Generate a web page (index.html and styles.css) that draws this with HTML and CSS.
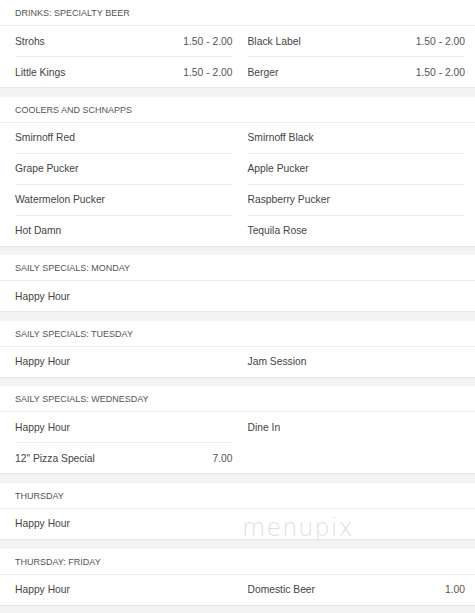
FILE: index.html
```html
<!DOCTYPE html>
<html lang="en">
<head>
    <meta charset="UTF-8">
    <title>Menu</title>
    <link rel="stylesheet" href="styles.css">
</head>
<body>

<div class="menu">
    <div class="section">
        <div class="section-title">DRINKS: SPECIALTY BEER</div>
        <div class="items">
            <div class="item"><span>Strohs</span><span class="price">1.50 - 2.00</span></div>
            <div class="item"><span>Black Label</span><span class="price">1.50 - 2.00</span></div>
            <div class="item"><span>Little Kings</span><span class="price">1.50 - 2.00</span></div>
            <div class="item"><span>Berger</span><span class="price">1.50 - 2.00</span></div>
        </div>
    </div>

    <div class="section">
        <div class="section-title">COOLERS AND SCHNAPPS</div>
        <div class="items">
            <div class="item"><span>Smirnoff Red</span></div>
            <div class="item"><span>Smirnoff Black</span></div>
            <div class="item"><span>Grape Pucker</span></div>
            <div class="item"><span>Apple Pucker</span></div>
            <div class="item"><span>Watermelon Pucker</span></div>
            <div class="item"><span>Raspberry Pucker</span></div>
            <div class="item"><span>Hot Damn</span></div>
            <div class="item"><span>Tequila Rose</span></div>
        </div>
    </div>

    <div class="section">
        <div class="section-title">SAILY SPECIALS: MONDAY</div>
        <div class="items">
            <div class="item"><span>Happy Hour</span></div>
        </div>
    </div>

    <div class="section">
        <div class="section-title">SAILY SPECIALS: TUESDAY</div>
        <div class="items">
            <div class="item"><span>Happy Hour</span></div>
            <div class="item"><span>Jam Session</span></div>
        </div>
    </div>

    <div class="section">
        <div class="section-title">SAILY SPECIALS: WEDNESDAY</div>
        <div class="items">
            <div class="item"><span>Happy Hour</span></div>
            <div class="item"><span>Dine In</span></div>
            <div class="item"><span>12" Pizza Special</span><span class="price">7.00</span></div>
        </div>
    </div>

    <div class="section watermarked">
        <div class="section-title">THURSDAY</div>
        <div class="items">
            <div class="item"><span>Happy Hour</span></div>
        </div>
        <div class="watermark">menupix</div>
    </div>

    <div class="section">
        <div class="section-title">THURSDAY: FRIDAY</div>
        <div class="items">
            <div class="item"><span>Happy Hour</span></div>
            <div class="item"><span>Domestic Beer</span><span class="price">1.00</span></div>
        </div>
    </div>
</div>

</body>
</html>
```

FILE: styles.css
```css
body {
    margin: 0;
    padding: 0;
    background-color: #f3f3f3;
    font-family: "Liberation Sans", Arial, sans-serif;
    color: #444;
}

.menu {
    display: flex;
    flex-direction: column;
    gap: 8.6px;
}

.section {
    background-color: #ffffff;
    border-bottom: 1px solid #e6e6e6;
}

.section-title {
    height: 24px;
    line-height: 24px;
    padding: 1px 0 0 15px;
    font-size: 9px;
    color: #555;
    border-bottom: 1px solid #ececec;
}

.items {
    display: grid;
    grid-template-columns: 1fr 1fr;
    column-gap: 15px;
    padding: 0 10px 0 15px;
}

.item {
    display: flex;
    justify-content: space-between;
    align-items: center;
    height: 30px;
    font-size: 10.3px;
}

.item:nth-child(n+3) {
    border-top: 1px solid #ececec;
}

.price {
    color: #555;
}

.watermarked {
    position: relative;
}

.watermark {
    position: absolute;
    left: 242px;
    top: 31px;
    font-family: "DejaVu Sans", sans-serif;
    font-size: 24px;
    font-weight: 200;
    letter-spacing: 1px;
    color: #e0e0e0;
    pointer-events: none;
}
```
